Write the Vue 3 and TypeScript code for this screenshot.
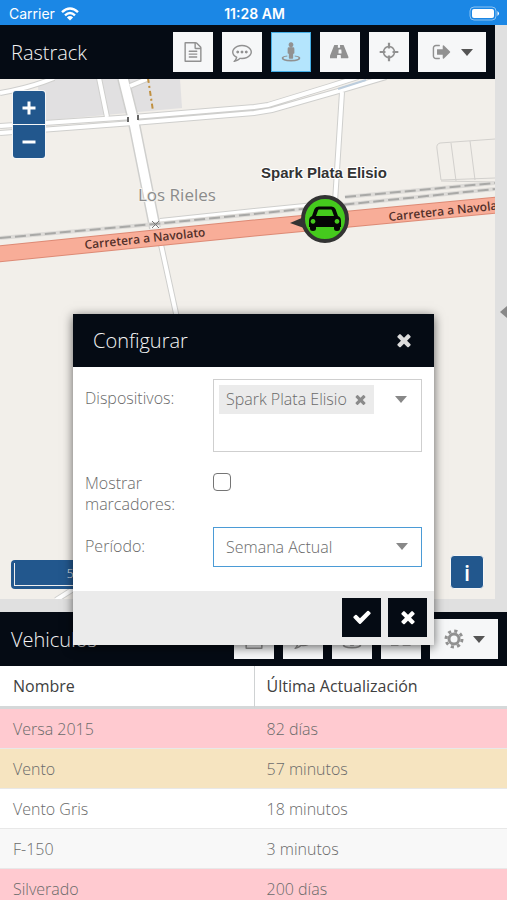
<script setup lang="ts">
import { ref } from 'vue'

interface Vehicle {
  name: string
  updated: string
  state: 'offline' | 'idle' | 'online'
}

interface Tool {
  label: string
  icon: string
  active?: boolean
}

const vehicles: Vehicle[] = [
  { name: 'Versa 2015', updated: '82 días', state: 'offline' },
  { name: 'Vento', updated: '57 minutos', state: 'idle' },
  { name: 'Vento Gris', updated: '18 minutos', state: 'online' },
  { name: 'F-150', updated: '3 minutos', state: 'online' },
  { name: 'Silverado', updated: '200 días', state: 'offline' },
]

const icons: Record<string, string> = {
  report:
    'M1596 380q28 28 48 76t20 88v1152q0 40-28 68t-68 28h-1344q-40 0-68-28t-28-68v-1600q0-40 28-68t68-28h896q40 0 88 20t76 48zm-444-244v376h376q-10-29-22-41l-313-313q-12-12-41-22zm384 1528v-1024h-416q-40 0-68-28t-28-68v-416h-768v1536h1280zm-1024-864q0-14 9-23t23-9h704q14 0 23 9t9 23v64q0 14-9 23t-23 9h-704q-14 0-23-9t-9-23v-64zm736 224q14 0 23 9t9 23v64q0 14-9 23t-23 9h-704q-14 0-23-9t-9-23v-64q0-14 9-23t23-9h704zm0 256q14 0 23 9t9 23v64q0 14-9 23t-23 9h-704q-14 0-23-9t-9-23v-64q0-14 9-23t23-9h704z',
  comment:
    'M640 896q0 53-37.500 90.500t-90.500 37.500-90.500-37.500-37.500-90.500 37.500-90.500 90.500-37.500 90.500 37.500 37.500 90.500zm384 0q0 53-37.500 90.500t-90.500 37.500-90.500-37.500-37.500-90.500 37.500-90.500 90.500-37.500 90.500 37.500 37.500 90.500zm384 0q0 53-37.500 90.500t-90.500 37.500-90.500-37.500-37.500-90.500 37.500-90.500 90.500-37.500 90.500 37.500 37.500 90.500zm-512-512q-204 0-381.500 69.500t-282 187.500-104.500 255q0 112 71.500 213.500t201.500 175.500l87 50-27 96q-24 91-70 172 152-63 275-171l43-38 57 6q69 8 130 8 204 0 381.500-69.500t282-187.500 104.500-255-104.500-255-282-187.500-381.500-69.500zm896 512q0 174-120 321.500t-326 233-450 85.500q-70 0-145-8-198 175-460 242-49 14-114 22h-5q-15 0-27-10.500t-16-27.500v-1q-3-4-.5-12t2-10 4.500-9.500l6-9 7-8.500 8-9q7-8 31-34.500t34.500-38 31-39.500 32.500-51 27-59 26-76q-157-89-247.500-220t-90.500-281q0-174 120-321.500t326-233 450-85.500 450 85.500 326 233 120 321.500z',
  road:
    'M1111 1000v-4l-24-320q-1-13-11-22.500t-23-9.500h-186q-13 0-23 9.500t-11 22.500l-24 320v4q-1 12 8 20t21 8h244q12 0 21-8t8-20zm658 428q0 73-46 73h-704q13 0 22-9.500t8-22.500l-20-256q-1-13-11-22.500t-23-9.500h-272q-13 0-23 9.500t-11 22.500l-20 256q-1 13 8 22.500t22 9.500h-704q-46 0-46-73 0-54 26-116l417-1044q8-19 26-33t38-14h339q-13 0-23 9.500t-11 22.500l-15 192q-1 14 8 23t22 9h166q13 0 22-9t8-23l-15-192q-1-13-11-22.500t-23-9.500h339q20 0 38 14t26 33l417 1044q26 62 26 116z',
  exit:
    'M704 1440q0 4 1 20t.5 26.500-3 23.500-10 19.500-20.500 6.500h-320q-119 0-203.500-84.500t-84.500-203.500v-704q0-119 84.500-203.500t203.500-84.500h320q13 0 22.500 9.500t9.500 22.500q0 4 1 20t.5 26.500-3 23.500-10 19.500-20.500 6.500h-320q-66 0-113 47t-47 113v704q0 66 47 113t113 47h312l11.500 1 11.500 3 8 5.500 7 9 2 13.500zm928-544q0 26-19 45l-544 544q-19 19-45 19t-45-19-19-45v-288h-448q-26 0-45-19t-19-45v-384q0-26 19-45t45-19h448v-288q0-26 19-45t45-19 45 19l544 544q19 19 19 45z',
  times:
    'M1490 1322q0 40-28 68l-136 136q-28 28-68 28t-68-28l-294-294-294 294q-28 28-68 28t-68-28l-136-136q-28-28-28-68t28-68l294-294-294-294q-28-28-28-68t28-68l136-136q28-28 68-28t68 28l294 294 294-294q28-28 68-28t68 28l136 136q28 28 28 68t-28 68l-294 294 294 294q28 28 28 68z',
  check:
    'M1671 566q0 40-28 68l-724 724-136 136q-28 28-68 28t-68-28l-136-136-362-362q-28-28-28-68t28-68l136-136q28-28 68-28t68 28l294 295 656-657q28-28 68-28t68 28l136 136q28 28 28 68z',
  street:
    'M896 30a215 215 0 1 0 1 0zM704 480q-110 0-110 128v384q0 64 64 64h46v384q0 64 64 64h256q64 0 64-64v-384h46q64 0 64-64v-384q0-128-110-128zM560 1200l10 110q-350 40-350 130 0 160 676 160t676-160q0-90-350-130l10-110q500 60 500 240 0 300-836 300t-836-300q0-180 500-240z',
  target:
    'M896 336a560 560 0 1 1-1 0zM896 476a420 420 0 1 0 1 0zM796 60h200v520h-200zM796 1212h200v520h-200zM60 796h520v200h-520zM1212 796h520v200h-520z',
}

const tools: Tool[] = [
  { label: 'Reportes', icon: 'report' },
  { label: 'Mensajes', icon: 'comment' },
  { label: 'Seguir', icon: 'street', active: true },
  { label: 'Rutas', icon: 'road' },
  { label: 'Ubicar', icon: 'target' },
]

const open = ref(true)
const devices = ref<string[]>(['Spark Plata Elisio'])
const showMarkers = ref(false)
const period = ref('Semana Actual')
</script>

<template>
  <div class="app">
    <div class="status">
      <span class="carrier">
        Carrier
        <svg class="wifi" viewBox="0 0 18 14" aria-hidden="true">
          <path d="M1 5.200Q9-2.400 17 5.200M4 8.400q5-4.600 10 0" />
          <path class="solid" d="M9 13.500 5.900 10.400q3.100-2.600 6.200 0z" />
        </svg>
      </span>
      <span class="clock">11:28 AM</span>
      <svg class="battery" viewBox="0 0 31 15" aria-hidden="true">
        <rect class="case" x="1" y="1" width="26" height="13" rx="4" />
        <rect x="3" y="3" width="22" height="9" rx="2" />
        <path d="M28.500 5q3 2.500 0 5z" />
      </svg>
    </div>

    <div class="workspace">
      <section class="map-panel">
        <header class="bar">
          <h1>Rastrack</h1>
          <div class="tools">
            <button v-for="t in tools" :key="t.icon" type="button" :class="['tool', { active: t.active }]" :aria-label="t.label">
              <svg class="icon" :viewBox="t.icon === 'road' ? '0 0 1920 1792' : '0 0 1792 1792'"><path :d="icons[t.icon]" /></svg>
            </button>
            <button type="button" class="tool wide" aria-label="Cuenta">
              <svg class="icon" viewBox="0 0 1792 1792"><path :d="icons.exit" /></svg>
              <span class="caret"></span>
            </button>
          </div>
        </header>

        <div class="map">
          <svg class="tiles" viewBox="0 79 495 520" preserveAspectRatio="xMinYMin slice" role="img" aria-label="Mapa">
            <path class="block" d="M38 86 50 79H180L182 108 40 121z" />
            <g class="casing">
              <path class="w6" d="M0 93Q30 88 54 78M0 126 133 117 254 107 268 105 330 86 358 77M0 133 133 123 254 113 272 110 342 90 386 77" />
              <path class="w5" d="M99 78 107 117M130 86 147 79M342 92 335 202M160 221 254 211 335 203M160 240 177 318M56 600 75 588" />
              <path class="w11" d="M123 78 133 118 155 228" />
            </g>
            <g class="road">
              <path class="w6" d="M0 93Q30 88 54 78M0 126 133 117 254 107 268 105 330 86 358 77M0 133 133 123 254 113 272 110 342 90 386 77" />
              <path class="w5" d="M99 78 107 117M130 86 147 79M342 92 335 202M160 221 254 211 335 203M160 240 177 318M56 600 75 588" />
              <path class="w11" d="M123 78 133 118 155 228" />
            </g>
            <path class="stream" d="M338 89 366 80" />
            <path class="track" d="M148 78 153 111" />
            <path class="tunnel" d="M128 117v5M138 115v5" />
            <path class="parcel" d="M495 139 440 143Q436 144 437 149L441 180 495 178M451 143 456 181M470 141 475 180M441 181 495 182" />
            <path class="rail-base" d="M0 238 155 224 254 214 495 189M345 197 495 183" />
            <path class="rail" d="M0 238 155 224 254 214 495 189M345 197 495 183" />
            <path class="highway-edge" d="M-2 254 155 238 254 228 497 205" />
            <path class="highway" d="M-2 254 155 238 254 228 497 205" />
            <path class="cross" d="m152 221 7 7m0-7-7 7" />
            <text class="street" transform="translate(85 249) rotate(-6)">Carretera a Navolato</text>
            <text class="street" transform="translate(389 221) rotate(-6)">Carretera a Navolato</text>
            <text class="place" x="138" y="201">Los Rieles</text>
            <text class="vehicle" x="324" y="178">Spark Plata Elisio</text>
            <path class="heading" d="M290 223 304 217V228z" />
            <circle class="pin" cx="325" cy="219" r="22" />
            <path
              class="car"
              fill-rule="evenodd"
              d="M312 216 314.500 209Q315.500 206.500 318.500 206.500H331.500Q334.500 206.500 335.500 209L338 216Q341 217 341 221V227H340V228.500Q340 231 337 231T334 228.500V227H316V228.500Q316 231 313 231T310 228.500V227H309V221Q309 217 312 216zM316 216H334L332 210.500Q331.700 209.500 331 209.500H319Q318.300 209.500 318 210.500zM313 219a2.400 2.400 0 1 0 .01 0zM337 219a2.400 2.400 0 1 0 .01 0z"
            />
          </svg>

          <div class="zoom">
            <button type="button" aria-label="Acercar"><svg viewBox="0 0 14 14"><path d="M7 0.500v13M0.500 7h13" /></svg></button>
            <button type="button" aria-label="Alejar"><svg viewBox="0 0 14 14"><path d="M0.500 7h13" /></svg></button>
          </div>
          <div class="scale"><span>500 m</span></div>
          <button type="button" class="info" aria-label="Información">i</button>
        </div>
        <button type="button" class="splitter" aria-label="Mostrar panel"></button>
      </section>

      <section class="list-panel">
        <header class="bar">
          <h2>Vehiculos</h2>
          <div class="tools">
            <button v-for="t in tools.slice(0, 4)" :key="t.label" type="button" class="tool" :aria-label="t.label">
              <svg class="icon" viewBox="0 0 1792 1792"><path :d="icons[t.icon]" /></svg>
            </button>
            <button type="button" class="tool wide" aria-label="Ajustes">
              <svg class="icon cog" viewBox="0 0 20 20">
                <circle class="rim" cx="10" cy="10" r="5" />
                <circle class="teeth" cx="10" cy="10" r="8" />
              </svg>
              <span class="caret"></span>
            </button>
          </div>
        </header>
        <table>
          <thead>
            <tr>
              <th scope="col">Nombre</th>
              <th scope="col">Última Actualización</th>
            </tr>
          </thead>
          <tbody>
            <tr v-for="v in vehicles" :key="v.name" :class="v.state">
              <td>{{ v.name }}</td>
              <td>{{ v.updated }}</td>
            </tr>
          </tbody>
        </table>
      </section>
    </div>

    <div v-if="open" class="overlay">
      <form class="dialog" role="dialog" aria-labelledby="dialog-title" @submit.prevent="open = false">
        <header class="dialog-head">
          <h2 id="dialog-title">Configurar</h2>
          <button type="button" class="close" aria-label="Cerrar" @click="open = false">
            <svg viewBox="0 0 1792 1792"><path :d="icons.times" /></svg>
          </button>
        </header>
        <div class="fields">
          <span id="devices-label" class="label">Dispositivos:</span>
          <div class="tags" role="group" aria-labelledby="devices-label">
            <span v-for="d in devices" :key="d" class="tag">
              {{ d }}
              <button type="button" :aria-label="'Quitar ' + d" @click="devices = devices.filter((x) => x !== d)">
                <svg viewBox="0 0 1792 1792"><path :d="icons.times" /></svg>
              </button>
            </span>
            <button type="button" class="tags-open" aria-label="Elegir dispositivos"><span class="caret"></span></button>
          </div>

          <label class="label" for="markers">Mostrar marcadores:</label>
          <input id="markers" v-model="showMarkers" type="checkbox" />

          <label class="label" for="period">Período:</label>
          <div class="select">
            <select id="period" v-model="period">
              <option>Semana Actual</option>
            </select>
            <span class="caret"></span>
          </div>
        </div>
        <footer class="dialog-foot">
          <button type="submit" aria-label="Aceptar"><svg viewBox="0 0 1792 1792"><path :d="icons.check" /></svg></button>
          <button type="button" aria-label="Cancelar" @click="open = false">
            <svg viewBox="0 0 1792 1792"><path :d="icons.times" /></svg>
          </button>
        </footer>
      </form>
    </div>
  </div>
</template>

<style>
body {
  margin: 0;
  overflow: hidden;
}
</style>

<style scoped>
* {
  box-sizing: border-box;
}

button {
  margin: 0;
  padding: 0;
  border: 0;
  font: inherit;
  cursor: pointer;
}

.app {
  position: relative;
  display: flex;
  flex-direction: column;
  height: 100vh;
  overflow: hidden;
  background: #e0e0e0;
  color: #6a6a6a;
  font-family: 'Open Sans', 'Noto Sans', sans-serif;
  font-size: 16px;
  font-weight: 300;
}

/* status bar */
.status {
  display: grid;
  grid-template-columns: 1fr auto 1fr;
  align-items: center;
  flex: none;
  height: 25px;
  padding: 2px 7px 0 9px;
  background: #1b87e5;
  color: #fff;
  font-family: Inter, 'Liberation Sans', sans-serif;
  font-size: 14px;
  font-weight: 400;
}

.carrier {
  display: flex;
  align-items: center;
  gap: 6px;
}

.clock {
  font-weight: 600;
}

.wifi {
  width: 18px;
  height: 14px;
  fill: none;
  stroke: #fff;
  stroke-width: 2.4;
}

.wifi .solid {
  fill: #fff;
  stroke: none;
}

.battery {
  justify-self: end;
  width: 31px;
  height: 15px;
  fill: #fff;
}

.battery .case {
  fill: none;
  stroke: #8cc3f2;
}

/* panels */
.workspace {
  display: grid;
  grid-template-rows: minmax(0, 587fr) minmax(0, 288fr);
  flex: 1;
  min-height: 0;
}

.map-panel {
  display: grid;
  grid-template: auto minmax(0, 1fr) / minmax(0, 1fr) 12px;
  min-height: 0;
  padding-bottom: 13px;
}

.list-panel {
  min-height: 0;
  overflow: hidden;
  background: #fff;
}

.bar {
  display: flex;
  align-items: center;
  justify-content: space-between;
  height: 54px;
  padding: 0 9px 0 11px;
  background: #050b14;
}

h1,
h2 {
  margin: 0;
  color: #f4f4f4;
  font-size: 20px;
  font-weight: 300;
}

.tools {
  display: flex;
  gap: 9px;
}

.tool {
  display: flex;
  align-items: center;
  justify-content: center;
  width: 40px;
  height: 40px;
  background: #f6f7f8;
}

.tool.active {
  border: 1px solid #45b0e8;
  background: #b4e5fd;
}

.tool.wide {
  gap: 9px;
  width: 68px;
}

.icon {
  width: 20px;
  height: 20px;
  fill: #919191;
}

.cog {
  fill: none;
  stroke: #919191;
}

.cog .rim {
  stroke-width: 3;
}

.cog .teeth {
  stroke-width: 3;
  stroke-dasharray: 3.140 3.140;
}

.caret {
  border: 6px solid transparent;
  border-top: 7px solid #555;
  border-bottom: 0;
}

/* map */
.map {
  position: relative;
  overflow: hidden;
  background: #f2efea;
}

.tiles {
  position: absolute;
  inset: 0;
  width: 100%;
  height: 100%;
}

.tiles path {
  fill: none;
}

.tiles .block {
  fill: #e1e0e1;
}

.casing {
  stroke: #cfcfcd;
}

.road {
  stroke: #fff;
}

.casing .w6 {
  stroke-width: 6px;
}

.casing .w5 {
  stroke-width: 6px;
}

.casing .w11 {
  stroke-width: 12px;
}

.road .w6 {
  stroke-width: 4px;
}

.road .w5 {
  stroke-width: 4px;
}

.road .w11 {
  stroke-width: 9px;
}

.stream {
  stroke: #bccddd;
  stroke-width: 2px;
}

.track {
  stroke: #c09040;
  stroke-width: 2px;
  stroke-dasharray: 5 3 2 3;
}

.tunnel {
  stroke: #666;
  stroke-width: 2px;
}

.parcel {
  stroke: #d2d0cd;
}

.rail-base {
  stroke: #dddbd8;
  stroke-width: 4px;
}

.rail {
  stroke: #a9a9a7;
  stroke-width: 2px;
  stroke-dasharray: 11 4;
}

.highway-edge {
  stroke: #dd8a75;
  stroke-width: 17px;
}

.highway {
  stroke: #f8ad98;
  stroke-width: 15px;
}

.cross {
  stroke: #777;
}

.street {
  fill: #53302a;
  font-size: 12px;
  font-weight: 600;
}

.place {
  fill: #8b8b8b;
  stroke: #f5f3ef;
  stroke-width: 2px;
  paint-order: stroke;
  font-size: 17px;
  font-weight: 400;
}

.vehicle {
  fill: #333;
  stroke: #fff;
  stroke-width: 2px;
  paint-order: stroke;
  font-family: 'Liberation Sans', sans-serif;
  font-size: 15px;
  font-weight: 700;
  text-anchor: middle;
}

.tiles .heading {
  fill: #333;
}

.pin {
  fill: #45ca1d;
  stroke: #333;
  stroke-width: 4px;
}

.tiles .car {
  fill: #050505;
}

.zoom {
  position: absolute;
  top: 11px;
  left: 12px;
  display: grid;
  gap: 1px;
  padding: 1px;
  border-radius: 4px;
  background: #f5f6f7;
}

.zoom button {
  display: grid;
  place-items: center;
  width: 32px;
  height: 33px;
  border-radius: 3px 3px 0 0;
  background: #22578d;
}

.zoom button + button {
  border-radius: 0 0 3px 3px;
}

.zoom svg {
  width: 14px;
  height: 14px;
  stroke: #fff;
  stroke-width: 3;
}

.scale {
  position: absolute;
  bottom: 10px;
  left: 11px;
  width: 146px;
  padding: 3px;
  border-radius: 4px;
  background: #22578d;
}

.scale span {
  display: block;
  height: 23px;
  border: 1px solid #eee;
  border-top: 0;
  color: #eee;
  font-size: 12px;
  line-height: 22px;
  text-align: center;
}

.info {
  position: absolute;
  right: 11px;
  bottom: 10px;
  width: 34px;
  height: 34px;
  border: 1px solid #f5f6f7;
  border-radius: 4px;
  background: #22578d;
  color: #fff;
  font-size: 22px;
  font-weight: 600;
  line-height: 32px;
}

.splitter {
  display: grid;
  grid-column: 2;
  grid-row: 1 / 3;
  place-items: center end;
  background: #e0e0e0;
}

.splitter::before {
  border: 6px solid transparent;
  border-right: 7px solid #888;
  border-left: 0;
  content: '';
}

/* vehicle table */
table {
  width: 100%;
  border-collapse: separate;
  border-spacing: 0;
  table-layout: fixed;
}

th,
td {
  padding: 0 13px;
  text-align: left;
}

th {
  height: 43px;
  border-bottom: 3px solid #d5d8d9;
  color: #404040;
  font-weight: 400;
}

th + th {
  padding-left: 12px;
  border-left: 1px solid #cfd2d3;
}

td {
  height: 40px;
  border-bottom: 1px solid #e8e8e8;
}

.offline td {
  background: #ffcad0;
}

.idle td {
  background: #f6e4c0;
}

.online:nth-child(even) td {
  background: #f8f8f8;
}

/* dialog */
.overlay {
  position: absolute;
  inset: 0;
  display: flex;
  align-items: center;
  justify-content: center;
  padding: 58px 73px 0;
}

.dialog {
  width: 100%;
  max-width: 480px;
  background: #fff;
  box-shadow: 0 2px 10px rgba(0, 0, 0, 0.6);
}

.dialog-head {
  display: flex;
  align-items: center;
  justify-content: space-between;
  height: 53px;
  padding: 0 20px;
  background: #050b14;
}

.close {
  display: grid;
  place-items: center;
  width: 20px;
  height: 20px;
  background: none;
}

.close svg {
  width: 20px;
  fill: #dcdcdc;
}

.fields {
  display: grid;
  grid-template-columns: 116px minmax(0, 1fr);
  gap: 12px;
  padding: 12px 12px 24px;
}

.label {
  padding-top: 9px;
  line-height: 21px;
}

.tags {
  display: flex;
  align-items: flex-start;
  justify-content: space-between;
  height: 73px;
  padding: 5px;
  border: 1px solid #cfcfcf;
}

.tag {
  display: flex;
  align-items: center;
  gap: 6px;
  height: 29px;
  padding: 0 6px 0 7px;
  background: #ebebeb;
  white-space: nowrap;
}

.tag button {
  display: flex;
  background: none;
}

.tag svg {
  width: 15px;
  height: 15px;
  fill: #8a8a8a;
}

.tags-open {
  display: grid;
  place-items: center;
  width: 30px;
  height: 29px;
  background: none;
}

.fields .caret {
  border-top-color: #888;
}

input[type='checkbox'] {
  width: 18px;
  height: 18px;
  margin: 9px 0 0;
  border: 1px solid #757575;
  border-radius: 4px;
  appearance: none;
  background: #fff;
}

input[type='checkbox']:checked {
  background: #22578d;
}

.select {
  display: grid;
  align-items: center;
}

.select > * {
  grid-area: 1 / 1;
}

.select .caret {
  justify-self: end;
  margin-right: 14px;
  pointer-events: none;
}

select {
  width: 100%;
  height: 40px;
  padding: 0 12px;
  border: 1px solid #4b9bd6;
  border-radius: 0;
  outline: 0;
  appearance: none;
  background: #fff;
  color: inherit;
  font: inherit;
}

.dialog-foot {
  display: flex;
  justify-content: flex-end;
  gap: 7px;
  padding: 7px 7px 8px;
  background: #ebebeb;
}

.dialog-foot button {
  display: grid;
  place-items: center;
  width: 39px;
  height: 39px;
  background: #050b14;
}

.dialog-foot svg {
  width: 20px;
  fill: #fff;
}
</style>
